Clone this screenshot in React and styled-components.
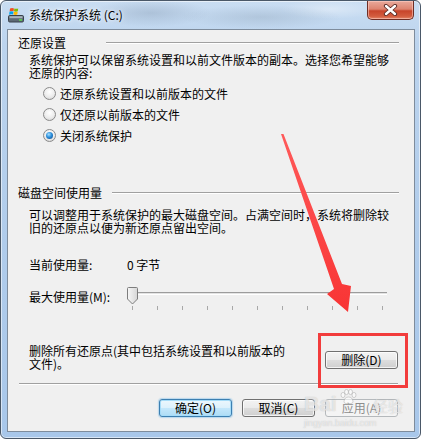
import React from "react";
import styled, { createGlobalStyle } from "styled-components";

const GlobalStyle = createGlobalStyle`
  html, body {
    margin: 0;
    padding: 0;
    background: #ffffff;
  }
  body {
    font-family: "Noto Sans CJK SC", "Liberation Sans", sans-serif;
    font-size: 12px;
    color: #000;
  }
`;

const Window = styled.div`
  position: relative;
  width: 421px;
  height: 439px;
  box-sizing: border-box;
  border: 1px solid #4a5868;
  border-radius: 6px;
  padding: 0 5px 6px 6px;
  display: flex;
  flex-direction: column;
  overflow: hidden;
  background:
    radial-gradient(ellipse 60px 14px at 150px 12px, rgba(110, 130, 155, 0.28), transparent),
    radial-gradient(ellipse 80px 12px at 260px 16px, rgba(120, 140, 160, 0.25), transparent),
    radial-gradient(ellipse 50px 10px at 330px 8px, rgba(255, 255, 255, 0.35), transparent),
    linear-gradient(180deg, #c9ddf2 0%, #bcd4ee 10%, #b0cceb 55%, #a8c7ea 100%);
  box-shadow: inset 0 0 0 1px rgba(255, 255, 255, 0.55);
`;

const TitleBar = styled.div`
  height: 28px;
  display: flex;
  align-items: center;
  padding-left: 1px;
`;

const TitleText = styled.span`
  margin-left: 5px;
  font-size: 12px;
  line-height: 14px;
  color: #000;
  text-shadow: 0 0 6px rgba(255, 255, 255, 0.9), 0 0 3px rgba(255, 255, 255, 0.9);
`;

const CloseButton = styled.div`
  margin-left: auto;
  margin-right: 1px;
  align-self: flex-start;
  width: 47px;
  height: 19px;
  box-sizing: border-box;
  border: 1px solid #6e2e25;
  border-top: none;
  border-radius: 0 0 5px 5px;
  display: flex;
  align-items: center;
  justify-content: center;
  background:
    linear-gradient(180deg, #e9a99b 0%, #dd8470 45%, #c8442b 55%, #d35d3f 85%, #e4866a 100%);
  box-shadow: inset 0 0 0 1px rgba(255, 210, 200, 0.55);
`;

const Client = styled.div`
  flex: 1;
  box-sizing: border-box;
  border: 1px solid #7e8c9c;
  background: #f0f0f0;
  padding: 6px 16px 0 10px;
  display: flex;
  flex-direction: column;
`;

const GroupHeader = styled.div`
  display: flex;
  align-items: center;
  height: 13px;
  line-height: 13px;
  margin-top: ${(p) => p.$top || 0}px;
`;

const HeaderRule = styled.div`
  flex: 1;
  margin-left: ${(p) => p.$gap}px;
  margin-right: -1px;
  border-top: 1px solid #a0a0a0;
  border-bottom: 1px solid #ffffff;
`;

const Paragraph = styled.div`
  margin-left: 11px;
  margin-top: ${(p) => p.$top}px;
  line-height: 12.5px;
  white-space: nowrap;
`;

const RadioList = styled.div`
  margin-top: 4px;
  display: flex;
  flex-direction: column;
`;

const RadioRow = styled.label`
  height: 21px;
  display: flex;
  align-items: center;
  margin-left: 25px;
  line-height: 13px;
`;

const RadioDot = styled.span`
  width: 13px;
  height: 13px;
  box-sizing: border-box;
  border-radius: 50%;
  border: 1px solid #8a8a8a;
  margin-right: 4px;
  display: flex;
  align-items: center;
  justify-content: center;
  background: radial-gradient(circle at 50% 35%, #ffffff 0%, #ececec 55%, #cfcfcf 100%);
  &::after {
    content: "";
    display: ${(p) => (p.$checked ? "block" : "none")};
    width: 7px;
    height: 7px;
    border-radius: 50%;
    background: radial-gradient(circle at 40% 35%, #a6e0ff 0%, #2c8fdc 45%, #0d4281 100%);
  }
`;

const InfoRow = styled.div`
  display: flex;
  align-items: flex-start;
  margin-top: ${(p) => p.$top}px;
  margin-left: 11px;
  line-height: 13px;
`;

const LabelCell = styled.span`
  width: 98px;
  flex-shrink: 0;
  margin-top: ${(p) => p.$top || 0}px;
`;

const SliderBox = styled.div`
  width: 262px;
  height: 26px;
  display: flex;
  flex-direction: column;
`;

const TrackArea = styled.div`
  position: relative;
  height: 18px;
`;

const Track = styled.div`
  position: absolute;
  left: 3px;
  right: 2px;
  top: 5px;
  height: 3px;
  box-sizing: border-box;
  border-top: 1px solid #9c9c9c;
  border-bottom: 1px solid #ffffff;
  background: #e3e3e3;
`;

const Thumb = styled.svg`
  position: absolute;
  left: 0;
  top: 0;
`;

const Ticks = styled.div`
  margin-top: 1px;
  padding: 0 6px 0 5px;
  display: flex;
  justify-content: space-between;
`;

const Tick = styled.span`
  width: 1px;
  height: 4px;
  background: #a8a8a8;
`;

const DeleteRow = styled.div`
  display: flex;
  align-items: flex-start;
  margin-top: 32px;
`;

const Button = styled.div`
  width: 73px;
  height: 18px;
  box-sizing: border-box;
  border-radius: 3px;
  margin-top: ${(p) => p.$top || 0}px;
  margin-left: ${(p) => (p.$push ? "auto" : "0")};
  display: flex;
  align-items: center;
  justify-content: center;
  font-size: 12px;
  line-height: 12px;
  color: ${(p) => (p.$disabled ? "#8d8d8d" : "#000")};
  border: 1px solid ${(p) => (p.$default ? "#3c7fb1" : p.$disabled ? "#b5b9bc" : "#707070")};
  background: ${(p) =>
    p.$default
      ? "linear-gradient(180deg, #ecf7fd 0%, #ddf1fc 48%, #c3e7fb 52%, #aedcf5 100%)"
      : p.$disabled
      ? "#f4f4f4"
      : "linear-gradient(180deg, #f3f3f3 0%, #ebebeb 48%, #dddddd 52%, #cfcfcf 100%)"};
  box-shadow: ${(p) =>
    p.$default
      ? "inset 0 0 0 1px #a6dcf8, 0 0 1px 1px rgba(80, 170, 230, 0.35)"
      : p.$disabled
      ? "none"
      : "inset 0 0 0 1px rgba(255, 255, 255, 0.75)"};
`;

const Separator = styled.div`
  margin: 13px 0 0 1px;
  border-top: 1px solid #a0a0a0;
  border-bottom: 1px solid #ffffff;
`;

const ButtonBar = styled.div`
  display: flex;
  justify-content: flex-end;
  gap: 10px;
  margin-top: 14px;
`;

const Highlight = styled.div`
  position: absolute;
  left: 317px;
  top: 332px;
  width: 90px;
  height: 55px;
  box-sizing: border-box;
  border: 3px solid #f23c3c;
  pointer-events: none;
`;

const ArrowLayer = styled.svg`
  position: absolute;
  left: 0;
  top: 0;
  pointer-events: none;
`;

const Watermark = styled.div`
  position: absolute;
  left: 303px;
  top: 384px;
  width: 100px;
  pointer-events: none;
  color: rgba(255, 255, 255, 0.6);
  text-shadow: 0 0 1px rgba(140, 140, 140, 0.55);
`;

const WatermarkTop = styled.div`
  display: flex;
  align-items: flex-end;
  height: 30px;
`;

const WatermarkBrand = styled.span`
  font-family: "Liberation Sans", sans-serif;
  font-weight: bold;
  font-size: 21px;
  line-height: 22px;
`;

const WatermarkWord = styled.span`
  font-size: 15px;
  line-height: 18px;
  margin-left: 16px;
`;

const WatermarkUrl = styled.div`
  font-family: "Liberation Sans", sans-serif;
  font-size: 9px;
  line-height: 10px;
  margin-top: 3px;
`;

const DriveIcon = () => (
  <svg width="16" height="16" viewBox="0 0 16 16">
    <path d="M2 1.5 Q4 0.6 6 1.4 L5.6 4.3 Q3.6 3.6 1.6 4.4 Z" fill="#f25022" />
    <path d="M6.4 1.4 Q8.4 2.2 10.2 1.4 L9.8 4.3 Q7.9 5 6 4.3 Z" fill="#7fba00" />
    <path d="M1.5 4.8 Q3.5 4 5.5 4.7 L5.1 7.6 Q3.1 6.9 1.1 7.7 Z" fill="#00a4ef" />
    <path d="M5.9 4.7 Q7.9 5.5 9.7 4.7 L9.3 7.6 Q7.4 8.3 5.5 7.6 Z" fill="#ffb900" />
    <rect x="0.5" y="8.5" width="15" height="6.5" rx="1.2" fill="#5e6a76" stroke="#39424c" />
    <rect x="1.5" y="9.2" width="13" height="2" fill="#a9b4be" />
    <rect x="11" y="12.2" width="3" height="1.5" fill="#5fe04a" />
  </svg>
);

const CloseGlyph = () => (
  <svg width="15" height="12" viewBox="0 0 15 12">
    <path d="M3 2 L12 10 M12 2 L3 10" stroke="#5a2a24" strokeWidth="4.2" strokeLinecap="round" />
    <path d="M3 2 L12 10 M12 2 L3 10" stroke="#ffffff" strokeWidth="2.4" strokeLinecap="round" />
  </svg>
);

const SliderThumb = () => (
  <Thumb width="11" height="18" viewBox="0 0 11 18">
    <defs>
      <linearGradient id="thumbFill" x1="0" y1="0" x2="1" y2="0">
        <stop offset="0" stopColor="#f7f7f7" />
        <stop offset="1" stopColor="#d6d6d6" />
      </linearGradient>
    </defs>
    <path
      d="M1.5 0.5 H9.5 Q10.5 0.5 10.5 1.5 V12 L5.5 17 L0.5 12 V1.5 Q0.5 0.5 1.5 0.5 Z"
      fill="url(#thumbFill)"
      stroke="#7d7d7d"
    />
  </Thumb>
);

const Paw = () => (
  <svg width="18" height="16" viewBox="0 0 18 16" style={{ marginLeft: 2, marginBottom: 10 }}>
    <g fill="rgba(255,255,255,0.6)" stroke="rgba(150,150,150,0.5)" strokeWidth="0.8">
      <ellipse cx="4" cy="6" rx="2" ry="2.6" />
      <ellipse cx="7.5" cy="3" rx="2" ry="2.6" />
      <ellipse cx="11.5" cy="3" rx="2" ry="2.6" />
      <ellipse cx="15" cy="6" rx="2" ry="2.6" />
      <path d="M9.5 8 Q13.5 8 14 12.5 Q14 15 9.5 14.5 Q5 15 5 12.5 Q5.5 8 9.5 8 Z" />
    </g>
  </svg>
);

const ticks = Array.from({ length: 11 }, (_, i) => i);

export default function App() {
  return (
    <>
      <GlobalStyle />
      <Window>
        <TitleBar>
          <DriveIcon />
          <TitleText>系统保护系统 (C:)</TitleText>
          <CloseButton>
            <CloseGlyph />
          </CloseButton>
        </TitleBar>

        <Client>
          <GroupHeader>
            <span>还原设置</span>
            <HeaderRule $gap={40} />
          </GroupHeader>
          <Paragraph $top={5}>
            系统保护可以保留系统设置和以前文件版本的副本。选择您希望能够
            <br />
            还原的内容:
          </Paragraph>
          <RadioList>
            <RadioRow>
              <RadioDot />
              还原系统设置和以前版本的文件
            </RadioRow>
            <RadioRow>
              <RadioDot />
              仅还原以前版本的文件
            </RadioRow>
            <RadioRow>
              <RadioDot $checked />
              关闭系统保护
            </RadioRow>
          </RadioList>

          <GroupHeader $top={40}>
            <span>磁盘空间使用量</span>
            <HeaderRule $gap={10} />
          </GroupHeader>
          <Paragraph $top={10}>
            可以调整用于系统保护的最大磁盘空间。占满空间时，系统将删除较
            <br />
            旧的还原点以便为新还原点留出空间。
          </Paragraph>
          <InfoRow $top={24}>
            <LabelCell>当前使用量:</LabelCell>
            <span>0 字节</span>
          </InfoRow>
          <InfoRow $top={16}>
            <LabelCell $top={3}>最大使用量(M):</LabelCell>
            <SliderBox>
              <TrackArea>
                <Track />
                <SliderThumb />
              </TrackArea>
              <Ticks>
                {ticks.map((t) => (
                  <Tick key={t} />
                ))}
              </Ticks>
            </SliderBox>
          </InfoRow>

          <DeleteRow>
            <Paragraph $top={0}>
              删除所有还原点(其中包括系统设置和以前版本的
              <br />
              文件)。
            </Paragraph>
            <Button $top={6} $push>
              删除(D)
            </Button>
          </DeleteRow>

          <Separator />
          <ButtonBar>
            <Button $default>确定(O)</Button>
            <Button>取消(C)</Button>
            <Button $disabled>应用(A)</Button>
          </ButtonBar>
        </Client>

        <Highlight />
        <ArrowLayer width="421" height="439" viewBox="0 0 421 439">
          <defs>
            <linearGradient id="arrowFill" x1="0" y1="0" x2="0" y2="1">
              <stop offset="0" stopColor="#ff5a5a" />
              <stop offset="1" stopColor="#f83434" />
            </linearGradient>
          </defs>
          <polygon
            points="280,133 282.5,133 341,283 350,285 347,311 326,293 333,288"
            fill="url(#arrowFill)"
          />
        </ArrowLayer>
        <Watermark>
          <WatermarkTop>
            <WatermarkBrand>Bai</WatermarkBrand>
            <Paw />
            <WatermarkWord>经验</WatermarkWord>
          </WatermarkTop>
          <WatermarkUrl>jingyan.baidu.com</WatermarkUrl>
        </Watermark>
      </Window>
    </>
  );
}
